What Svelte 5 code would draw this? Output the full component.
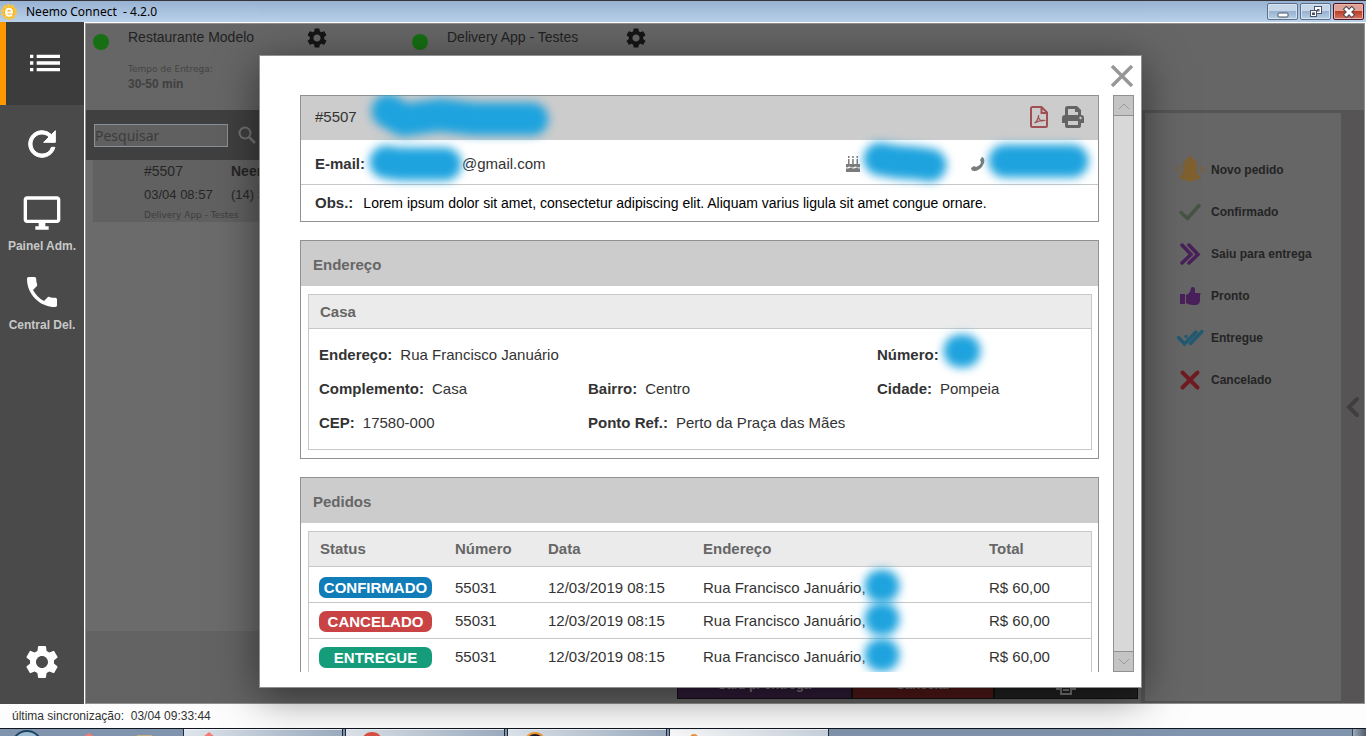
<script>
  let search = "";

  const gearPath =
    "M19.14 12.94c.04-.3.06-.61.06-.94 0-.32-.02-.64-.07-.94l2.03-1.58a.49.49 0 0 0 .12-.61l-1.92-3.32a.488.488 0 0 0-.59-.22l-2.39.96c-.5-.38-1.03-.7-1.62-.94l-.36-2.54a.484.484 0 0 0-.48-.41h-3.84c-.24 0-.43.17-.47.41l-.36 2.54c-.59.24-1.13.57-1.62.94l-2.39-.96c-.22-.08-.47 0-.59.22L2.74 8.87c-.12.21-.08.47.12.61l2.03 1.58c-.05.3-.09.63-.09.94s.02.64.07.94l-2.03 1.58a.49.49 0 0 0-.12.61l1.92 3.32c.12.22.37.29.59.22l2.39-.96c.5.38 1.03.7 1.62.94l.36 2.54c.05.24.24.41.48.41h3.84c.24 0 .44-.17.47-.41l.36-2.54c.59-.24 1.13-.56 1.62-.94l2.39.96c.22.08.47 0 .59-.22l1.92-3.32c.12-.22.07-.47-.12-.61l-2.01-1.58zM12 15.6c-1.98 0-3.6-1.62-3.6-3.6s1.62-3.6 3.6-3.6 3.6 1.62 3.6 3.6-1.62 3.6-3.6 3.6z";

  const menu = [
    { name: "Pedidos", active: true, path: "M3 13h2v-2H3v2zm0 4h2v-2H3v2zm0-8h2V7H3v2zm4 4h14v-2H7v2zm0 4h14v-2H7v2zM7 7v2h14V7H7z" },
    { name: "Atualizar", path: "M17.65 6.35A7.958 7.958 0 0 0 12 4c-4.42 0-7.99 3.58-7.99 8s3.57 8 7.99 8c3.73 0 6.84-2.55 7.73-6h-2.08A5.99 5.99 0 0 1 12 18c-3.31 0-6-2.69-6-6s2.69-6 6-6c1.66 0 3.14.69 4.22 1.78L13 11h7V4l-2.35 2.35z", heavy: true },
    { name: "Painel", label: "Painel Adm.", path: "M21 2H3c-1.1 0-2 .9-2 2v12c0 1.1.9 2 2 2h7v2H8v2h8v-2h-2v-2h7c1.1 0 2-.9 2-2V4c0-1.1-.9-2-2-2zm0 14H3V4h18v12z" },
    { name: "Central", label: "Central Del.", path: "M6.62 10.79c1.44 2.83 3.76 5.14 6.59 6.59l2.2-2.2c.27-.27.67-.36 1.02-.24 1.12.37 2.33.57 3.57.57.55 0 1 .45 1 1V20c0 .55-.45 1-1 1-9.39 0-17-7.61-17-17 0-.55.45-1 1-1h3.5c.55 0 1 .45 1 1 0 1.25.2 2.45.57 3.57.11.35.03.74-.25 1.02l-2.2 2.2z" },
  ];

  const stores = [
    { name: "Restaurante Modelo", time: "30-50 min" },
    { name: "Delivery App - Testes", time: "" },
  ];

  const legend = [
    { icon: "bell", label: "Novo pedido" },
    { icon: "check", label: "Confirmado" },
    { icon: "arrows", label: "Saiu para entrega" },
    { icon: "thumb", label: "Pronto" },
    { icon: "double", label: "Entregue" },
    { icon: "cross", label: "Cancelado" },
  ];

  const orders = [
    { status: "CONFIRMADO", number: "55031", date: "12/03/2019 08:15", address: "Rua Francisco Januário,", total: "R$ 60,00" },
    { status: "CANCELADO", number: "55031", date: "12/03/2019 08:15", address: "Rua Francisco Januário,", total: "R$ 60,00" },
    { status: "ENTREGUE", number: "55031", date: "12/03/2019 08:15", address: "Rua Francisco Januário,", total: "R$ 60,00" },
  ];
</script>

<!-- blue brush stroke that hides private data -->
{#snippet smudge(width, d)}
  <svg class="smudge" {width} height="38" viewBox="0 0 {width} 38" aria-hidden="true">
    <path {d} />
  </svg>
{/snippet}

<div class="window">
  <header class="titlebar">
    <svg class="logo" width="18" height="18" viewBox="0 0 18 18">
      <circle cx="9" cy="9" r="6.5" fill="#f6b71c" stroke="#f9c440" stroke-width="3" stroke-dasharray="3 1" />
      <path d="M6 9.5h6c0-5-6-5-6 0 0 4 4 4 6 2" fill="none" stroke="#fff" stroke-width="2" />
    </svg>
    <span class="app-name">Neemo Connect &nbsp;- 4.2.0</span>
    <div class="window-buttons">
      <button aria-label="Minimizar">
        <svg width="12" height="12" viewBox="0 0 12 12"><rect x="1" y="7" width="10" height="4" rx="1" fill="#fff" stroke="#4b5468" /></svg>
      </button>
      <button aria-label="Restaurar">
        <svg width="14" height="12" viewBox="0 0 14 12" fill="#fff" stroke="#4b5468">
          <rect x="5.5" y="0.5" width="7" height="7" />
          <rect x="8.5" y="3.5" width="1.5" height="1.5" />
          <rect x="1.5" y="4.5" width="6" height="6" />
          <rect x="3.5" y="7" width="2" height="1.5" fill="#a5bdd6" />
        </svg>
      </button>
      <button class="red" aria-label="Sair">
        <svg width="14" height="12" viewBox="0 0 14 12">
          <path d="M2.5 1.5l9 9M11.5 1.5l-9 9" stroke="#4b4a58" stroke-width="5" />
          <path d="M3.2 2.2l7.6 7.6M10.8 2.2l-7.6 7.6" stroke="#fff" stroke-width="3" />
        </svg>
      </button>
    </div>
  </header>

  <div class="main">
    <nav class="sidebar">
      {#each menu as item}
        <button class="menu-item" class:active={item.active} class:heavy={item.heavy} aria-label={item.name}>
          <svg width="40" height="40" viewBox="0 0 24 24"><path d={item.path} /></svg>
          {#if item.label}<span>{item.label}</span>{/if}
        </button>
      {/each}
      <button class="menu-item settings" aria-label="Ajustes">
        <svg width="40" height="40" viewBox="0 0 24 24"><path d={gearPath} /></svg>
      </button>
    </nav>

    <div class="workspace">
      <div class="stores">
        {#each stores as store}
          <div class="store">
            <span class="dot"></span>
            <div class="store-info">
              <div class="store-name">{store.name}</div>
              {#if store.time}
                <div class="store-label">Tempo de Entrega:</div>
                <div class="store-time">{store.time}</div>
              {/if}
            </div>
            <button class="store-gear" aria-label="Ajustes da loja">
              <svg width="24" height="24" viewBox="0 0 24 24"><path d={gearPath} /></svg>
            </button>
          </div>
        {/each}
      </div>

      <div class="columns">
        <section class="orders">
          <div class="search">
            <input type="text" placeholder="Pesquisar" aria-label="Pesquisar" bind:value={search} />
            <button aria-label="Buscar">
              <svg width="18" height="18" viewBox="0 0 18 18" fill="none" stroke="#737373" stroke-width="2">
                <circle cx="7" cy="7" r="5.5" /><path d="M11 11l6 6" stroke-width="2.5" />
              </svg>
            </button>
          </div>
          <div class="order-list">
            <article class="order">
              <div class="order-line first"><span>#5507</span><b>Neemo</b></div>
              <div class="order-line"><span>03/04 08:57</span><span>(14) 3</span></div>
              <div class="order-store">Delivery App - Testes</div>
            </article>
          </div>
          <div class="actions">
            <button class="ship">Saiu p/ entrega</button>
            <button class="cancel">Cancelar</button>
            <button class="print" aria-label="Imprimir">
              <svg width="22" height="20" viewBox="0 0 22 20" fill="none" stroke="#777" stroke-width="2">
                <path d="M6 14H2V7h18v7h-4M6 7V2h10v5M6 11h10v8H6zM8 15h6" />
              </svg>
            </button>
          </div>
        </section>

        <aside class="legend-side">
          <ul class="legend">
            {#each legend as item}
              <li>
                <svg width="30" height="30" viewBox="0 0 30 30" fill="none" stroke-linecap="round">
                  {#if item.icon === "bell"}
                    <path d="M15 3c-4 0-7 3-7 8v7l-4 5c2 1 5 2 8 2 1 3 5 3 6 0 3 0 6-1 8-2l-4-5v-7c0-5-3-8-7-8z" fill="#80602f" />
                    <circle cx="15" cy="3" r="2" stroke="#80602f" />
                    <path d="M10.500 10c0-3 2-4 4-4" stroke="#666" />
                    <path d="M4 11q-2 4 0 7M1.500 12q-1.500 3 0 5M26 11q2 4 0 7M28.500 12q1.500 3 0 5" stroke="#80602f" />
                  {:else if item.icon === "check"}
                    <path d="M6 15.500l6.500 6L24 8.500" stroke="#465443" stroke-width="3.500" />
                  {:else if item.icon === "arrows"}
                    <path d="M7 6l9 9.500L7 24M14 6l9 9.500-9 8.500" stroke="#49205a" stroke-width="3.500" />
                  {:else if item.icon === "thumb"}
                    <path d="M5 13h5v10H5zM11 14c3-1 5-4 5-7 1-2 4-1 4 1v4h4c2 0 2 1 1 2v6c-1 3-2 4-5 4-3 0-5 0-9-2z" fill="#49205a" />
                  {:else if item.icon === "double"}
                    <path d="M3.500 14.500l6 6.500L21 9M11 13.500v.1M15.500 20.500L27 8.500" stroke="#225a72" stroke-width="3.500" />
                  {:else}
                    <path d="M7.500 7.500l15 15M22.500 7.500l-15 15" stroke="#701b21" stroke-width="4" />
                  {/if}
                </svg>
                <span>{item.label}</span>
              </li>
            {/each}
          </ul>
          <button class="collapse" aria-label="Recolher">
            <svg width="14" height="22" viewBox="0 0 14 22"><path d="M11 3l-8 8 8 8" fill="none" stroke="#3f3f3f" stroke-width="4" stroke-linecap="round" /></svg>
          </button>
        </aside>
      </div>
    </div>
  </div>

  <footer class="sync">última sincronização: &nbsp;03/04 09:33:44</footer>

  <div class="taskbar">
    <div class="quick">
      <svg width="160" height="8" viewBox="0 0 160 8">
        <circle cx="27" cy="17" r="15" fill="#9dbbd2" stroke="#1f4565" stroke-width="2" />
        <path d="M83 8l6-4 6 4z" fill="#f77b74" />
        <path d="M137 6h15v2h-15z" fill="#c4ad7e" />
      </svg>
    </div>
    <div class="task"><svg width="30" height="8"><path d="M4 8l6-5 6 5z" fill="#f77b74" /></svg></div>
    <div class="task"><svg width="30" height="8"><circle cx="11" cy="14" r="11" fill="#db5145" /></svg></div>
    <div class="task"><svg width="30" height="8"><circle cx="12" cy="14" r="10" fill="#211a2a" stroke="#ee9a33" stroke-width="2" /></svg></div>
    <div class="task current"><svg width="30" height="8"><circle cx="9" cy="9" r="4" fill="#e9923b" /></svg></div>
    <div class="desktop"></div>
  </div>

  <div class="modal" role="dialog" aria-label="Cliente">
    <div class="modal-top">
      <button class="close" aria-label="Fechar">
        <svg width="24" height="24" viewBox="0 0 24 24"><path d="M2 2l20 20M22 2L2 22" stroke="#979797" stroke-width="3.5" /></svg>
      </button>
    </div>
    <div class="modal-body">
      <div class="cards">
        <section class="card">
          <div class="customer">
            <span class="customer-id">#5507</span>
            {@render smudge(184, "M20 13L36 22L72 17L106 21L164 21")}
            <button class="push" aria-label="PDF">
              <svg width="18" height="22" viewBox="0 0 18 22" fill="none" stroke="#a05053">
                <path d="M2.500 1h9L17 6.500v13a1.500 1.500 0 0 1-1.500 1.500h-13A1.500 1.500 0 0 1 1 19.500v-17A1.500 1.500 0 0 1 2.500 1zM11.500 1v6H17" stroke-width="2" />
                <path d="M4.500 17c2-1 4-5 4.200-8M8.500 11c.5 3 3 4.500 5.500 3.500-3-.5-6 .5-9.500 2.500" stroke-width="1.3" />
              </svg>
            </button>
            <button aria-label="Imprimir">
              <svg width="22" height="22" viewBox="0 0 22 22">
                <path d="M3 9V2.500A2.500 2.500 0 0 1 5.500 0H15l4 4v5a3 3 0 0 1 3 3v5h-3v3a2 2 0 0 1-2 2H5a2 2 0 0 1-2-2v-3H0v-5a3 3 0 0 1 3-3zM6 3v6h10V6h-3V3zM6 15v4h10v-4z" fill="#646464" fill-rule="evenodd" />
                <circle cx="18.5" cy="12" r="1.2" fill="#ccc" />
              </svg>
            </button>
          </div>
          <div class="contact">
            <b>E-mail:</b>
            {@render smudge(101, "M21 17L34 19L55 19L80 19")}
            <span class="mail">@gmail.com</span>
            <svg class="push" width="14" height="16" viewBox="0 0 14 16" fill="#7b7b7b">
              <path d="M2 3h1.500v5H2zM6.200 3h1.500v5H6.200zM10.500 3H12v5h-1.500zM2 0h1.500v2H2zM6.200 0h1.500v2H6.200zM10.500 0H12v2h-1.500zM0 8h14v3q-1.500 1-3 0-1.500-1-3 0-1.500 1-3 0-1.500-1-3 0Q1 12 0 11zM0 12q1.500 1 3 0 1.500-1 3 0 1.500 1 3 0 1.500-1 3 0 1 1 2 0v4H0z" />
            </svg>
            {@render smudge(92, "M20 14L38 17L55 18L70 20")}
            <svg class="handset" width="14" height="14" viewBox="0 0 14 14">
              <path d="M11 0c3 1 3 5 1 8-2 4-6 6-9 6-2 0-3-2-3-3l3-2 2 1c3-1 5-3 5-5L9 3z" fill="#7b7b7b" />
            </svg>
            {@render smudge(104, "M20 16L87 16")}
          </div>
          <div class="note"><b>Obs.:</b><span>Lorem ipsum dolor sit amet, consectetur adipiscing elit. Aliquam varius ligula sit amet congue ornare.</span></div>
        </section>

        <section class="card">
          <h2>Endereço</h2>
          <div class="box">
            <h3>Casa</h3>
            <div class="address">
              <div class="wide"><b>Endereço:</b>Rua Francisco Januário</div>
              <div><b class="tight">Número:</b>{@render smudge(48, "M21 15L25 15")}</div>
              <div><b>Complemento:</b>Casa</div>
              <div><b>Bairro:</b>Centro</div>
              <div><b>Cidade:</b>Pompeia</div>
              <div><b>CEP:</b>17580-000</div>
              <div class="wide"><b>Ponto Ref.:</b>Perto da Praça das Mães</div>
            </div>
          </div>
        </section>

        <section class="card">
          <h2>Pedidos</h2>
          <div class="box">
            <table>
              <colgroup>
                <col class="c-status" /><col class="c-number" /><col class="c-date" /><col class="c-address" /><col />
              </colgroup>
              <thead>
                <tr><th>Status</th><th>Número</th><th>Data</th><th>Endereço</th><th>Total</th></tr>
              </thead>
              <tbody>
                {#each orders as order}
                  <tr>
                    <td><span class="badge {order.status.toLowerCase()}">{order.status}</span></td>
                    <td>{order.number}</td>
                    <td>{order.date}</td>
                    <td><div class="place">{order.address}{@render smudge(40, "M17 17L19 17")}</div></td>
                    <td>{order.total}</td>
                  </tr>
                {/each}
              </tbody>
            </table>
          </div>
        </section>
      </div>
      <div class="scrollbar">
        <button aria-label="Subir"><svg width="12" height="8" viewBox="0 0 12 8"><path d="M1 7l5-5 5 5" /></svg></button>
        <button aria-label="Descer"><svg width="12" height="8" viewBox="0 0 12 8"><path d="M1 1l5 5 5-5" /></svg></button>
      </div>
    </div>
  </div>
</div>

<style>
  * {
    box-sizing: border-box;
  }
  :global(body) {
    background: #fff;
  }
  button {
    padding: 0;
    border: none;
    background: none;
    font-family: inherit;
    cursor: pointer;
  }
  svg {
    display: block;
    flex: none;
  }
  .window {
    position: relative;
    display: flex;
    flex-direction: column;
    height: 100vh;
    overflow: hidden;
    font-family: "Liberation Sans", Arial, sans-serif;
    color: #333;
  }

  /* title bar */
  .titlebar {
    display: flex;
    align-items: center;
    flex: none;
    height: 22px;
    border-top: 1px solid #37343a;
    background: linear-gradient(#98b2d2, #b9d1ea);
  }
  .app-name {
    margin-left: 8px;
    font: 12px "Noto Sans", "Open Sans", sans-serif;
    color: #000;
  }
  .window-buttons {
    display: flex;
    gap: 2px;
    margin-left: auto;
    padding-right: 2px;
  }
  .window-buttons button {
    display: flex;
    align-items: center;
    justify-content: center;
    width: 31px;
    height: 17px;
    border: 1px solid #5d6e8a;
    border-radius: 2px;
    background: linear-gradient(#c5d6e8 45%, #98b2cf 50%, #b7cfe6);
    box-shadow: inset 0 0 0 1px #d5e3f1;
  }
  .window-buttons .red {
    border-color: #4a1420;
    background: linear-gradient(#e0a195 45%, #bb3f27 50%, #d27462);
    box-shadow: inset 0 0 0 1px #e9b3a9;
  }

  /* sidebar */
  .main {
    display: flex;
    flex: 1;
    min-height: 0;
  }
  .sidebar {
    display: flex;
    flex-direction: column;
    flex: none;
    width: 84px;
    background: #4a4a4a;
  }
  .menu-item {
    display: flex;
    flex-direction: column;
    align-items: center;
    gap: 5px;
    height: 79px;
    padding-top: 19px;
    color: #c8c8c8;
    font-size: 12px;
    line-height: 16px;
    font-weight: bold;
  }
  .menu-item svg {
    fill: #fff;
  }
  .menu-item.heavy svg {
    stroke: #fff;
    stroke-width: 0.6;
  }
  .menu-item.active {
    height: 83px;
    border-left: 6px solid #ff9800;
    padding-top: 21px;
    background: #3c3c3c;
  }
  .menu-item:nth-child(3),
  .menu-item:nth-child(4) {
    padding-top: 9px;
  }
  .menu-item.settings {
    margin-top: auto;
    height: 81px;
  }

  /* workspace */
  .workspace {
    display: flex;
    flex-direction: column;
    flex: 1;
    min-width: 0;
    margin: 1px 1px 0;
    border: 1px solid #919191;
    background: #666;
  }
  .stores {
    display: flex;
    height: 86px;
    padding-left: 7px;
  }
  .store {
    display: flex;
    width: 319px;
    padding-top: 2px;
  }
  .dot {
    width: 16px;
    height: 16px;
    margin: 8px 19px 0 0;
    border-radius: 50%;
    background: #166f13;
  }
  .store-info {
    width: 177px;
  }
  .store-name {
    font-size: 14px;
    line-height: 22px;
    color: #222;
  }
  .store-label {
    margin-top: 15px;
    font: 9px/12px "DejaVu Sans", sans-serif;
    color: #444;
  }
  .store-time {
    font-size: 12px;
    line-height: 18px;
    font-weight: bold;
    color: #404040;
  }
  .store-gear {
    align-self: flex-start;
  }
  .store-gear svg {
    fill: #151515;
  }
  .columns {
    display: flex;
    flex: 1;
    min-height: 0;
  }
  .orders {
    display: flex;
    flex-direction: column;
    flex: 1;
    background: #6b6b6b;
  }
  .search {
    display: flex;
    align-items: center;
    gap: 10px;
    height: 50px;
    padding-left: 8px;
    background: #404040;
  }
  .search input {
    width: 134px;
    height: 23px;
    padding: 0;
    border: 1px solid #8a9097;
    background: #606060;
    font: 14px "Noto Sans", sans-serif;
  }
  .search input::placeholder {
    color: #3c3c3c;
  }
  .order-list {
    flex: 1;
    padding-left: 7px;
  }
  .order {
    height: 62px;
    padding-left: 51px;
    background: #616161;
    font-size: 13px;
    line-height: 23px;
    color: #262626;
  }
  .order-line {
    display: flex;
  }
  .order-line span:first-child {
    width: 87px;
  }
  .order-line.first {
    font-size: 14px;
  }
  .order-store {
    font: 9px/18px "DejaVu Sans", sans-serif;
    color: #3e3e3e;
  }
  .actions {
    display: flex;
    justify-content: flex-end;
    align-items: flex-end;
    height: 72px;
    padding: 0 3px 4px 0;
    background: #636363;
  }
  .actions button {
    display: flex;
    align-items: center;
    justify-content: center;
    height: 29px;
    border: 1px solid #111;
    color: #777;
    font-size: 13px;
    font-weight: bold;
  }
  .actions .ship {
    width: 175px;
    background: #2f1b38;
  }
  .actions .cancel {
    width: 142px;
    background: #4f1717;
  }
  .actions .print {
    width: 144px;
    background: #212121;
  }

  /* legend */
  .legend-side {
    display: flex;
    flex: none;
    width: 223px;
    padding: 3px 0 2px 4px;
    background: #575455;
  }
  .legend {
    flex: 1;
    margin: 0;
    padding: 36px 0 0 30px;
    list-style: none;
    background: #666;
  }
  .legend li {
    display: flex;
    align-items: center;
    gap: 6px;
    height: 42px;
    font-size: 12px;
    font-weight: bold;
    color: #242424;
  }
  .collapse {
    display: flex;
    align-items: center;
    justify-content: center;
    width: 23px;
  }

  /* bottom bars */
  .sync {
    flex: none;
    height: 24px;
    padding-left: 12px;
    background: #fdfdfd;
    font-size: 12px;
    line-height: 24px;
  }
  .taskbar {
    display: flex;
    gap: 2px;
    flex: none;
    height: 8px;
    overflow: hidden;
    border-top: 1px solid #10161f;
    background: #8094ad;
  }
  .quick {
    width: 181px;
  }
  .task {
    width: 160px;
    padding-left: 15px;
    border: solid #222c39;
    border-width: 0 1px;
    background: linear-gradient(100deg, #dfe5ec, #9dadc1);
    box-shadow: inset 0 1px #eef2f6;
  }
  .task.current {
    background: linear-gradient(100deg, #fafafa, #c8d2dd);
  }
  .desktop {
    width: 14px;
    margin-left: auto;
    border-left: 1px solid #39475a;
    background: linear-gradient(90deg, #9caabc, #4d5b6d);
  }

  /* modal */
  .modal {
    position: absolute;
    top: 55px;
    right: 224px;
    bottom: 48px;
    left: 259px;
    display: flex;
    flex-direction: column;
    padding: 0 7px 15px 40px;
    border: 1px solid #919191;
    background: #fff;
    box-shadow: 0 8px 40px rgba(0, 0, 0, 0.5);
    font-size: 15px;
    line-height: 18px;
  }
  .modal-top {
    display: flex;
    justify-content: flex-end;
    align-items: center;
    flex: none;
    height: 39px;
  }
  .modal-body {
    display: flex;
    gap: 14px;
    flex: 1;
    min-height: 0;
  }
  .cards {
    flex: 1;
    overflow: hidden;
  }
  .card {
    margin-bottom: 18px;
    border: 1px solid #919191;
  }
  .customer {
    display: flex;
    align-items: center;
    gap: 11px;
    height: 44px;
    padding: 0 14px 2px;
    background: #ccc;
  }
  .push {
    margin-left: auto;
  }
  .customer button + button {
    margin-left: 3px;
  }
  .contact {
    display: flex;
    align-items: center;
    height: 45px;
    padding: 3px 9px 0 14px;
    border-bottom: 1px solid #c8c8c8;
  }
  .mail {
    margin-left: -4px;
  }
  .handset {
    margin-left: 19px;
  }
  .note {
    display: flex;
    gap: 10px;
    padding: 9px 14px;
  }
  .note span {
    font-size: 14px;
    color: #000;
  }
  .smudge {
    overflow: visible;
    filter: blur(5px);
    fill: none;
    stroke: #1ea3de;
    stroke-width: 33px;
    stroke-linecap: round;
    stroke-linejoin: round;
  }
  h2,
  h3 {
    margin: 0;
    font-size: 15px;
    color: #666;
  }
  h2 {
    height: 45px;
    padding: 3px 12px 0;
    background: #ccc;
    line-height: 42px;
  }
  .box {
    margin: 8px 6px 8px 7px;
    border: 1px solid #c8c8c8;
  }
  h3 {
    padding: 0 11px;
    border-bottom: 1px solid #c8c8c8;
    background: #ebebeb;
    line-height: 33px;
  }
  .address {
    display: grid;
    grid-template-columns: 269px 289px 1fr;
    grid-auto-rows: 34px;
    padding: 9px 10px;
  }
  .address div {
    display: flex;
    align-items: center;
    gap: 8px;
  }
  .address .wide {
    grid-column: span 2;
  }
  .address .tight {
    margin-right: -8px;
  }
  table {
    width: 100%;
    table-layout: fixed;
    border-collapse: collapse;
  }
  .c-status {
    width: 135px;
  }
  .c-number {
    width: 93px;
  }
  .c-date {
    width: 155px;
  }
  .c-address {
    width: 286px;
  }
  th {
    height: 34px;
    padding: 0 11px;
    background: #ebebeb;
    color: #666;
    text-align: left;
  }
  td {
    height: 36px;
    padding: 2px 0 0 11px;
    border-top: 1px solid #c8c8c8;
  }
  tr:first-child td {
    padding-top: 7px;
  }
  td:first-child {
    padding-left: 10px;
  }
  .badge {
    display: block;
    width: 113px;
    border-radius: 7px;
    color: #fff;
    font-weight: bold;
    line-height: 21px;
    text-align: center;
  }
  .confirmado {
    background: #107db8;
  }
  .cancelado {
    background: #c94244;
  }
  .entregue {
    background: #159c7a;
  }
  .place {
    display: flex;
    align-items: center;
    height: 20px;
  }
  .place .smudge {
    margin-left: -2px;
  }
  .scrollbar {
    display: flex;
    flex-direction: column;
    justify-content: space-between;
    width: 21px;
    border: 1px solid #919191;
    background: #d8d8d8;
  }
  .scrollbar button {
    display: flex;
    align-items: center;
    justify-content: center;
    height: 20px;
    background: #c4c4c4;
    border-bottom: 1px solid #919191;
  }
  .scrollbar button + button {
    border-top: 1px solid #919191;
    border-bottom: none;
  }
  .scrollbar path {
    fill: none;
    stroke: #999;
  }
</style>
